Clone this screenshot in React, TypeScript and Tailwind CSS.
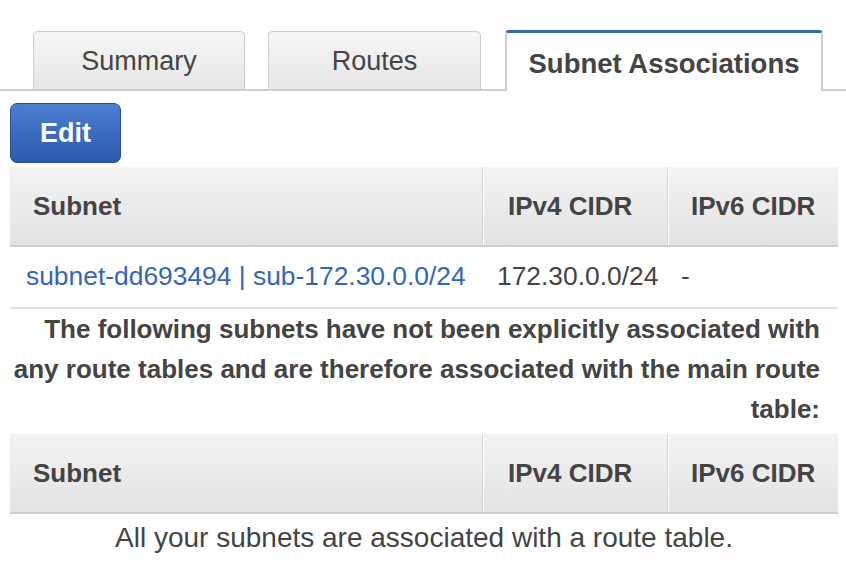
import React from "react";

function HeaderRow() {
  return (
    <div className="flex h-[80px] bg-gradient-to-b from-[#f3f3f3] to-[#e3e3e3] border-b-2 border-[#cfcfcf] text-[26px] font-bold text-[#444]">
      <div className="w-[473px] flex items-center pl-[23px] border-r border-[#d4d4d4]">Subnet</div>
      <div className="w-[185px] flex items-center pl-[24px] border-l border-white border-r border-r-[#d4d4d4]">IPv4 CIDR</div>
      <div className="flex-1 flex items-center pl-[22px] border-l border-white">IPv6 CIDR</div>
    </div>
  );
}

export default function App() {
  return (
    <div
      className="w-[846px] h-[586px] bg-white text-[#444] overflow-hidden"
      style={{ fontFamily: '"Liberation Sans", Arial, Helvetica, sans-serif' }}
    >
      {/* Tabs */}
      <div className="flex items-end pt-[30px] border-b-2 border-[#cccccc] h-[91px]">
        <div className="ml-[33px] w-[212px] h-[58px] pt-[2px] flex items-center justify-center rounded-t-[5px] border border-b-0 border-[#cccccc] bg-gradient-to-b from-[#f6f6f6] to-[#e6e6e6] text-[27px] text-[#444]">
          Summary
        </div>
        <div className="ml-[23px] w-[213px] h-[58px] pt-[2px] flex items-center justify-center rounded-t-[5px] border border-b-0 border-[#cccccc] bg-gradient-to-b from-[#f6f6f6] to-[#e6e6e6] text-[27px] text-[#444]">
          Routes
        </div>
        <div className="ml-[24px] w-[318px] h-[61px] -mb-[2px] pt-[3px] flex items-center justify-center rounded-t-[4px] border-t-[3px] border-t-[#3a67b5] border-x-2 border-x-[#cccccc] bg-white text-[27.5px] font-bold text-[#444]">
          Subnet Associations
        </div>
      </div>

      {/* Edit button */}
      <div className="pl-[10px] pt-[12px]">
        <button className="w-[111px] h-[60px] rounded-[7px] border border-[#244f9c] bg-gradient-to-b from-[#4d7ed2] to-[#2c5aab] text-white text-[27px] font-bold flex items-center justify-center">
          Edit
        </button>
      </div>

      {/* Table 1 */}
      <div className="ml-[10px] w-[828px] mt-[4px]">
        <HeaderRow />
        <div className="flex h-[62px] items-center border-b-2 border-[#e2e2e2] text-[26.4px]">
          <div className="w-[473px] pl-[16px] text-[#3366b8] whitespace-nowrap">subnet-dd693494 | sub-172.30.0.0/24</div>
          <div className="w-[185px] pl-[14px] text-[#444] whitespace-nowrap">172.30.0.0/24</div>
          <div className="flex-1 pl-[13px] text-[#444]">-</div>
        </div>
        <div className="text-right pr-[18px] text-[26px] font-bold leading-[40px] text-[#444] whitespace-nowrap">
          The following subnets have not been explicitly associated with
          <br />
          any route tables and are therefore associated with the main route
          <br />
          table:
        </div>
        <div className="mt-[5px]">
          <HeaderRow />
        </div>
        <div className="pt-[2px] text-center text-[28px] leading-[44px] text-[#444]">
          All your subnets are associated with a route table.
        </div>
      </div>
    </div>
  );
}
